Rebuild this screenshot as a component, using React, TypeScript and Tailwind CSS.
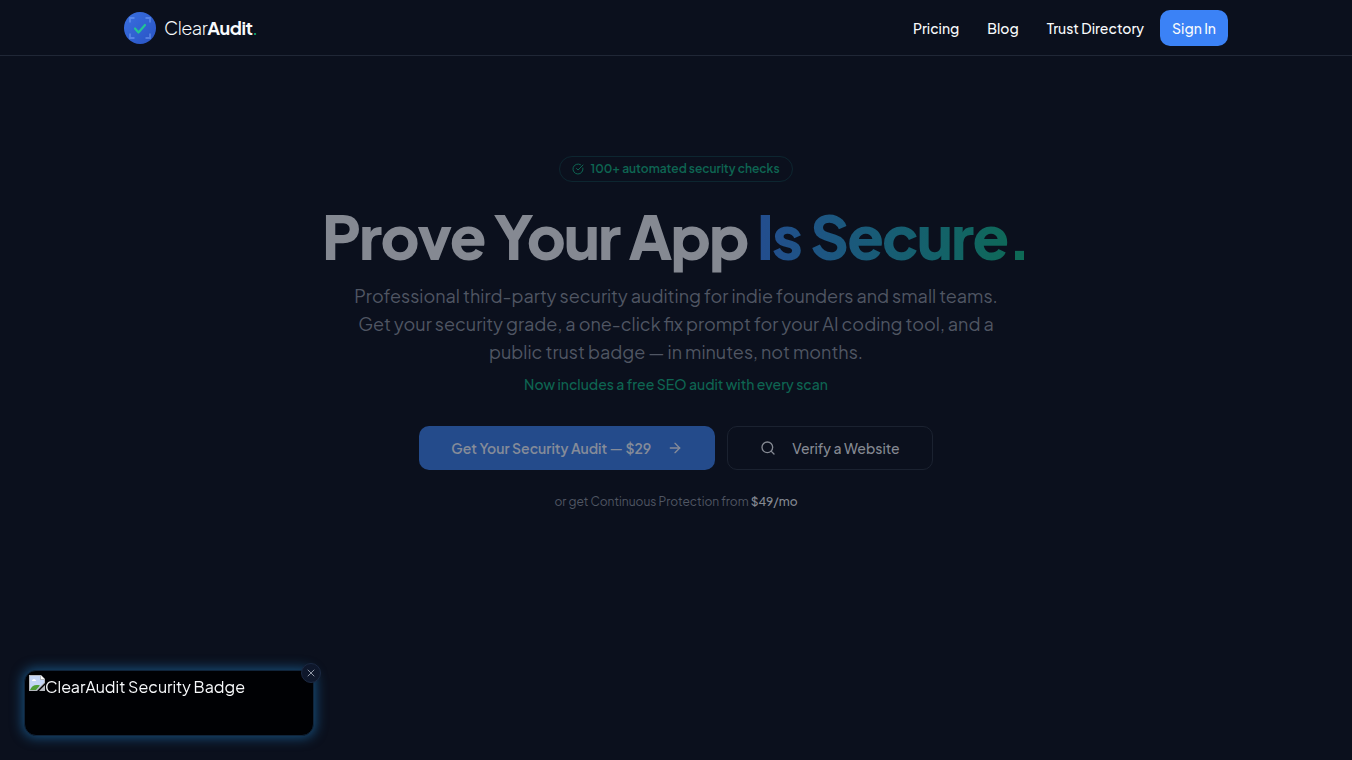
import React from "react";
import { ArrowRight, CircleCheckBig, Search, X } from "lucide-react";

function Logo() {
  return (
    <a href="#" className="flex items-center gap-2">
      <svg className="size-8" viewBox="0 0 32 32" fill="none">
        <defs>
          <linearGradient id="logo-fill" x1="0" y1="0" x2="1" y2="1">
            <stop stopColor="#3a70e0" />
            <stop offset="1" stopColor="#2853c4" />
          </linearGradient>
        </defs>
        <circle cx="16" cy="16" r="16" fill="url(#logo-fill)" />
        <path
          d="M6 10.500V6H10.500M21.500 6H26V10.500M26 21.500V26H21.500M10.500 26H6V21.500"
          stroke="#7ba6fa"
          strokeOpacity="0.5"
          strokeWidth="1.8"
        />
        <path
          d="M11 16.500L14.500 20.500L21 13"
          stroke="#22c595"
          strokeWidth="2.200"
          strokeLinecap="round"
          strokeLinejoin="round"
        />
      </svg>
      <span className="text-lg font-light tracking-tight">
        Clear<span className="font-bold">Audit</span>
        <span className="font-normal text-[#10b981]">.</span>
      </span>
    </a>
  );
}

function Header() {
  return (
    <header className="h-14 border-b border-[#202736]">
      <div className="mx-auto flex h-full max-w-6xl items-center justify-between px-6">
        <Logo />
        <nav className="flex items-center gap-4 text-sm font-medium">
          <div className="flex items-center gap-7">
            <a href="#pricing">Pricing</a>
            <a href="#blog">Blog</a>
            <a href="#directory">Trust Directory</a>
          </div>
          <button className="h-9 rounded-[10px] bg-[#3b82f6] px-3">Sign In</button>
        </nav>
      </div>
    </header>
  );
}

function Hero() {
  return (
    <section className="flex flex-col items-center px-6 pt-25 pb-61 text-center">
      <div className="flex h-[26px] items-center gap-1.5 rounded-full border border-[#0d2630] px-3 text-xs font-semibold text-[#0e6552]">
        <CircleCheckBig className="size-3" />
        100+ automated security checks
      </div>
      <h1 className="mt-6 text-6xl leading-[60px] font-extrabold tracking-[-0.03em] text-[#858992]">
        Prove Your App{" "}
        <span className="bg-linear-to-r from-[#234d8f] to-[#0e6a53] bg-clip-text text-transparent">
          Is Secure.
        </span>
      </h1>
      <p className="mt-4 max-w-[680px] text-lg leading-7 text-[#505663]">
        Professional third-party security auditing for indie founders and small teams.
        <br />
        Get your security grade, a one-click fix prompt for your AI coding tool, and a
        <br />
        public trust badge — in minutes, not months.
      </p>
      <p className="mt-2 text-sm leading-5 font-medium text-[#0e6552]">
        Now includes a free SEO audit with every scan
      </p>
      <div className="mt-8 flex gap-3">
        <button className="flex h-11 items-center justify-center gap-4 rounded-[10px] bg-[#244b8b] px-8 text-sm font-semibold text-[#858b99]">
          Get Your Security Audit — $29
          <ArrowRight className="size-4" />
        </button>
        <button className="flex h-11 items-center justify-center gap-4 rounded-[10px] border border-[#1b2230] px-8 text-sm font-medium text-[#858992]">
          <Search className="size-4" />
          Verify a Website
        </button>
      </div>
      <p className="mt-6 text-xs leading-4 text-[#505663]">
        or get Continuous Protection from{" "}
        <a href="#pricing" className="font-medium text-[#858992]">
          $49/mo
        </a>
      </p>
    </section>
  );
}

function SecurityBadge() {
  return (
    <aside className="fixed bottom-6 left-6 h-[66px] w-[290px] rounded-xl border border-[#10243a] bg-[#000104] p-1 shadow-[0_0_12px_2px_#174d78]">
      <div className="flex items-start text-base leading-6">
        <svg className="size-4" viewBox="0 0 16 16">
          <path d="M0 0H12L16 4V8L8 16H0Z" fill="#b4b8be" />
          <path d="M1 1H11V5H15V7.500L7.500 15H1Z" fill="#c4d6f7" />
          <path d="M3 6C3 3.500 7 3.500 7 6Z" fill="#fff" />
          <path d="M1 15C2.500 11 6 9 11 10.500L7 15Z" fill="#4f9f38" />
          <path d="M12 0.500V4H15.500Z" fill="#fff" />
          <path d="M16 10V16H10Z" fill="#b4b8be" />
        </svg>
        ClearAudit Security Badge
      </div>
      <button
        aria-label="Close badge"
        className="absolute -top-2 -right-2 flex size-5 items-center justify-center rounded-full border border-[#1c2942] bg-[#0e172b] text-[#b9c0cd]"
      >
        <X className="size-3" strokeWidth={1.5} />
      </button>
    </aside>
  );
}

export default function App() {
  return (
    <div className="min-h-screen bg-[#0b101d] font-['Plus_Jakarta_Sans',Inter,sans-serif] text-[#f8fafc]">
      <Header />
      <Hero />
      <SecurityBadge />
    </div>
  );
}
